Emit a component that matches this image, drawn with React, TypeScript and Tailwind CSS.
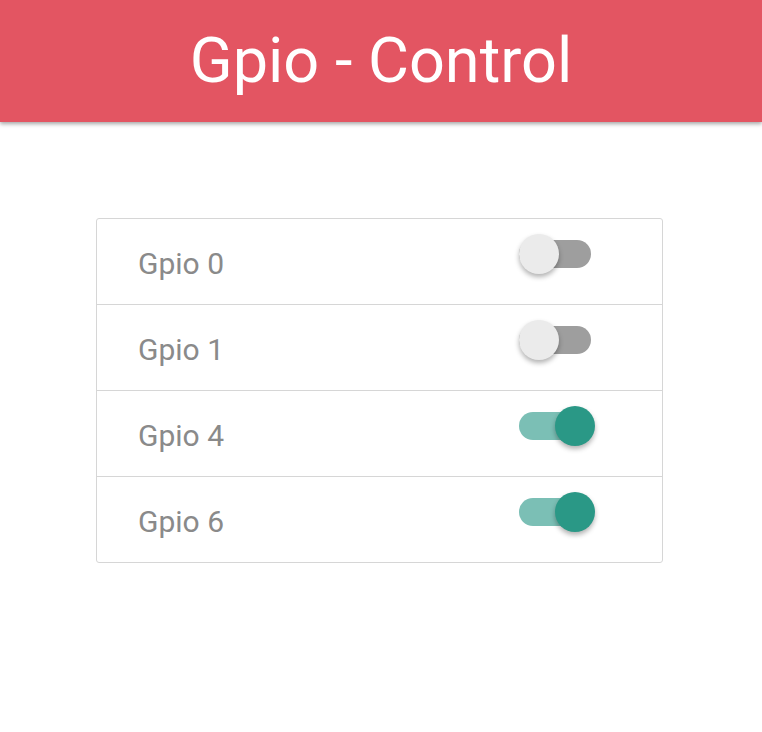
const rows = [
  { label: "Gpio 0", on: false },
  { label: "Gpio 1", on: false },
  { label: "Gpio 4", on: true },
  { label: "Gpio 6", on: true },
];

const Toggle: React.FC<{ on: boolean }> = ({ on }) => {
  return (
    <div className="relative w-[76px] h-[40px] flex items-center">
      <div
        className={
          on
            ? "w-[72px] h-[28px] rounded-full bg-[#7bbfb5]"
            : "w-[72px] h-[28px] rounded-full bg-[#9e9e9e]"
        }
      ></div>
      <div
        className={
          on
            ? "absolute left-[36px] top-0 w-[40px] h-[40px] rounded-full bg-[#2a9886] shadow-[0_3px_5px_rgba(0,0,0,0.3)]"
            : "absolute left-0 top-0 w-[40px] h-[40px] rounded-full bg-[#ebebeb] shadow-[0_3px_5px_rgba(0,0,0,0.3)]"
        }
      ></div>
    </div>
  );
};

export default function App() {
  return (
    <div className="min-h-[732px] bg-white font-['Roboto',sans-serif]">
      <header className="h-[122px] bg-[#e35562] flex items-center justify-center shadow-[0_2px_4px_rgba(0,0,0,0.35)]">
        <h1 className="text-white text-[63px] leading-none pb-[2px]">Gpio - Control</h1>
      </header>
      <div className="pt-[96px] pl-[96px]">
        <div className="w-[567px] border border-[#d6d6d6] rounded-[3px]">
          {rows.map((r, i) => (
            <div
              key={r.label}
              className={
                i === 0
                  ? "h-[85px] flex items-center pl-[41px] pr-[67px] justify-between"
                  : "h-[86px] flex items-center pl-[41px] pr-[67px] justify-between border-t border-[#d6d6d6]"
              }
            >
              <span className="text-[#8a8a8a] text-[30px] pt-[4px]">{r.label}</span>
              <div className="mb-[16px]">
                <Toggle on={r.on} />
              </div>
            </div>
          ))}
        </div>
      </div>
    </div>
  );
}
